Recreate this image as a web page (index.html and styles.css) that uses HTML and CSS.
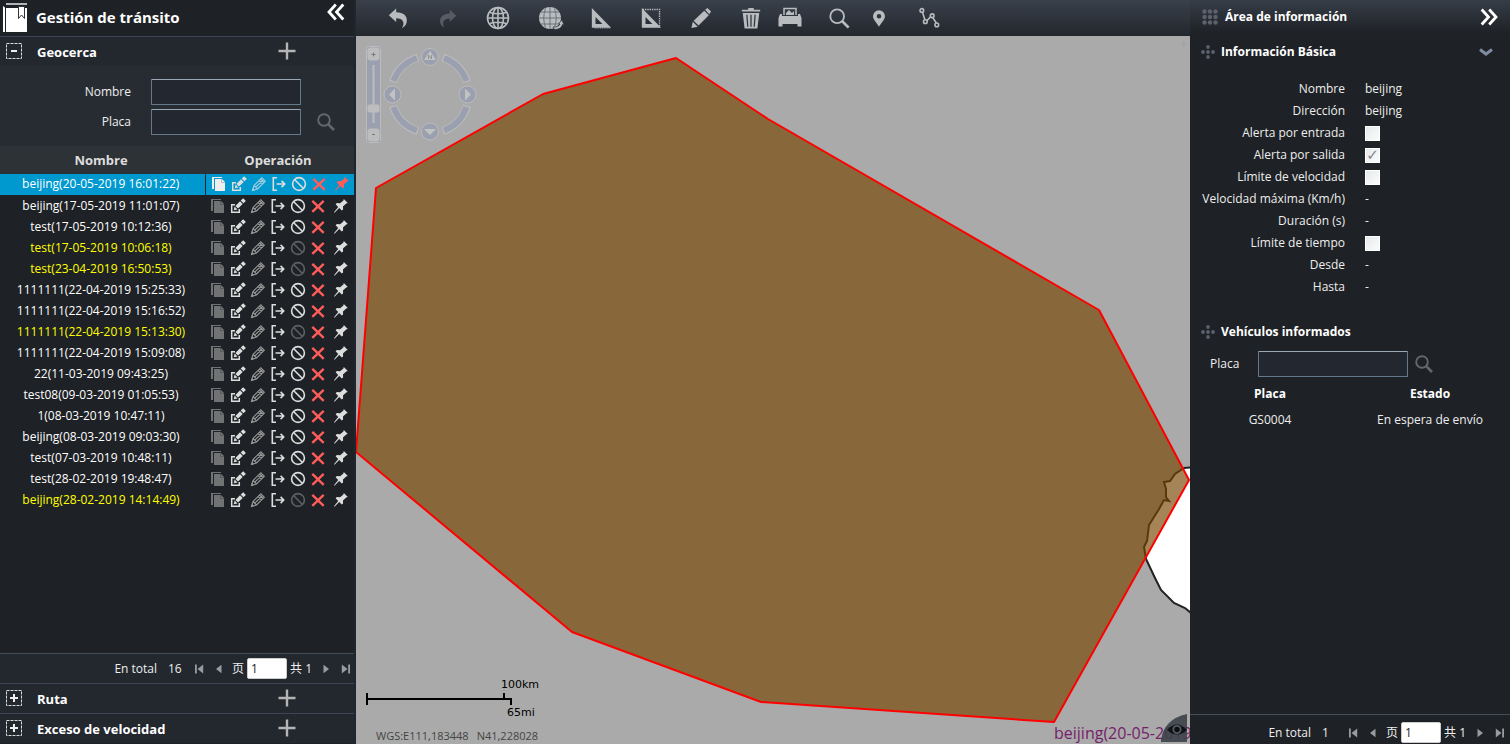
FILE: index.html
```html
<!DOCTYPE html>
<html lang="es">
<head>
<meta charset="utf-8">
<title>Gestión de tránsito</title>
<link rel="stylesheet" href="styles.css">
</head>
<body>
<svg class="sprite" aria-hidden="true">
  <symbol id="i-copy" viewBox="0 0 16 16"><path fill="currentColor" d="M1 1h10v1H3v11H1z"/><path fill="currentColor" d="M4 3h7l3 3v9H4z"/><path d="M10.500 3v3.500H14" fill="none" stroke="#0003"/></symbol>
  <symbol id="i-edit" viewBox="0 0 16 16"><path fill="none" stroke="currentColor" stroke-width="1.500" d="M5 6.700H1.700v7.600h7.600V11"/><path fill="currentColor" d="M3.800 12.200l.8-3.700 2.900 2.900zM5.400 7.900l4.600-4.600L12.700 6 8.100 10.600zM10.700 2.600L13.200.3l2.700 2.700-2.500 2.300z"/></symbol>
  <symbol id="i-pencil" viewBox="0 0 16 16"><path fill="none" stroke="currentColor" stroke-width="1.100" d="M1.500 14.500L3 9.500 10.800 1.700l3.500 3.500L6.500 13zM3 9.500L6.500 13M4.800 11.200l7.700-7.700M9.500 3l3.500 3.500M8 4.500L11.500 8"/><path fill="currentColor" d="M1 15l1-3 2 2z"/></symbol>
  <symbol id="i-export" viewBox="0 0 16 16"><path fill="none" stroke="currentColor" stroke-width="1.600" d="M6 1.800H2.300v12.400H6M5.500 8h8M10.600 4.900L13.700 8l-3.100 3.100"/></symbol>
  <symbol id="i-ban" viewBox="0 0 16 16"><g fill="none" stroke="currentColor" stroke-width="1.600"><circle cx="8" cy="8" r="6.400"/><path d="M3.500 3.500l9 9"/></g></symbol>
  <symbol id="i-x" viewBox="0 0 16 16"><path fill="none" stroke="currentColor" stroke-width="2.400" d="M2.300 2.800l11.400 11M13.700 2.800l-11.400 11"/></symbol>
  <symbol id="i-pin" viewBox="0 0 16 16"><path fill="currentColor" d="M10.800 1l4 4-1.600.4-3.200 3 .1 3-1.300 1.200-2.600-2.700L1.500 14.800 1 14.300l4.200-5.400L2.600 6.300l1.300-1.200 3.200.2 3.300-2.900z"/></symbol>
  <symbol id="i-search" viewBox="0 0 20 20"><g fill="none" stroke="currentColor"><circle cx="8" cy="8" r="5.800" stroke-width="1.900"/><path stroke-width="2.600" d="M12.400 12.400l5.600 5.600"/></g></symbol>
  <symbol id="i-plus" viewBox="0 0 18 18"><path fill="none" stroke="currentColor" stroke-width="2.400" d="M9 .5v17M.5 9h17"/></symbol>
  <symbol id="i-move" viewBox="0 0 14 14"><g fill="currentColor"><circle cx="7" cy="2" r="1.900"/><circle cx="2" cy="7" r="1.900"/><circle cx="7" cy="7" r="1.900"/><circle cx="12" cy="7" r="1.900"/><circle cx="7" cy="12" r="1.900"/></g></symbol>
  <symbol id="i-first" viewBox="0 0 10 10"><path fill="currentColor" d="M1 .5h1.800v9H1zM9.200.5v9L3.500 5z"/></symbol>
  <symbol id="i-prev" viewBox="0 0 10 10"><path fill="currentColor" d="M7.500.8v8.400L2 5z"/></symbol>
  <symbol id="i-next" viewBox="0 0 10 10"><path fill="currentColor" d="M2.500.8v8.400L8 5z"/></symbol>
  <symbol id="i-last" viewBox="0 0 10 10"><path fill="currentColor" d="M7.200.5H9v9H7.200zM.8.5v9L6.500 5z"/></symbol>
</svg>

<div class="app">
  <aside class="side">
    <header class="side-head">
      <svg class="book" viewBox="0 0 26 29"><path fill="#b5b5b5" d="M3 0h21v2H3z"/><path fill="#fff" d="M0 3l2 1.500V29H0z"/><path fill="#fff" d="M3 5h21v24H3z"/><path fill="#1e2125" d="M2 2h22v3H4z"/><path fill="#fff" stroke="#333" d="M15.500 3.500h6v12L18.500 12l-3 3.500z"/></svg>
      <h1>Gestión de tránsito</h1>
      <button class="collapse" aria-label="Contraer"><svg viewBox="0 0 18 18"><path fill="none" stroke="currentColor" stroke-width="2.800" d="M8.800 1.500L2 9l6.800 7.500M16.300 1.500L9.500 9l6.800 7.500"/></svg></button>
    </header>

    <section class="bar">
      <button class="toggle" aria-label="Contraer Geocerca"><svg viewBox="0 0 16 16"><rect x=".5" y=".5" width="15" height="15" fill="none" stroke="#ddd" stroke-dasharray="3 1"/><path stroke="#eee" stroke-width="2" d="M5 8h6"/></svg></button>
      <h2>Geocerca</h2>
      <button class="add" aria-label="Agregar geocerca"><svg><use href="#i-plus"/></svg></button>
    </section>

    <form class="filter">
      <label for="f-name">Nombre</label><input id="f-name" class="field" type="text">
      <label for="f-plate">Placa</label><input id="f-plate" class="field" type="text">
      <button class="find" type="button" aria-label="Buscar"><svg><use href="#i-search"/></svg></button>
    </form>

    <div class="list">
      <table class="fences">
        <thead><tr><th class="col-name">Nombre</th><th>Operación</th></tr></thead>
        <tbody id="fence-rows"></tbody>
      </table>
    </div>

    <nav class="pager" aria-label="Páginas de geocercas">
      <span>En total</span><span class="count">16</span>
      <button aria-label="Primera"><svg><use href="#i-first"/></svg></button>
      <button class="prev" aria-label="Anterior"><svg><use href="#i-prev"/></svg></button>
      <label for="p-left">页</label><input id="p-left" type="text" value="1"><span class="pages">共 1</span>
      <button aria-label="Siguiente"><svg><use href="#i-next"/></svg></button>
      <button aria-label="Última"><svg><use href="#i-last"/></svg></button>
    </nav>

    <section class="bar">
      <button class="toggle" aria-label="Expandir Ruta"><svg viewBox="0 0 16 16"><rect x=".5" y=".5" width="15" height="15" fill="none" stroke="#ddd" stroke-dasharray="3 1"/><path stroke="#eee" stroke-width="2" d="M4 8h8M8 4v8"/></svg></button>
      <h2>Ruta</h2>
      <button class="add" aria-label="Agregar ruta"><svg><use href="#i-plus"/></svg></button>
    </section>
    <section class="bar">
      <button class="toggle" aria-label="Expandir Exceso de velocidad"><svg viewBox="0 0 16 16"><rect x=".5" y=".5" width="15" height="15" fill="none" stroke="#ddd" stroke-dasharray="3 1"/><path stroke="#eee" stroke-width="2" d="M4 8h8M8 4v8"/></svg></button>
      <h2>Exceso de velocidad</h2>
      <button class="add" aria-label="Agregar exceso de velocidad"><svg><use href="#i-plus"/></svg></button>
    </section>
  </aside>

  <main class="center">
    <div class="toolbar">
      <div class="tools">
        <button aria-label="Deshacer"><svg viewBox="0 0 24 24"><path fill="currentColor" d="M2 9L10 1.500v4.300c8 0 12.500 4.200 11.500 10.200-.5 3.500-2.500 5.500-5.500 7.200 2-2.700 2.500-5.200 1.500-7.500-1-2.500-3.500-3.400-7.500-3.400v4z"/></svg></button>
        <button class="dim" aria-label="Rehacer"><svg viewBox="0 0 24 24"><path fill="currentColor" d="M21 9.500L14 3v4C7 7 2.500 11 3.500 16.500c.5 3 2.300 4.700 4.500 6-1.500-2.700-1.800-5-.8-7C8.300 13.500 10.500 12.600 14 12.600V16z"/></svg></button>
        <button aria-label="Mundo"><svg class="globe" viewBox="0 0 24 24"><g fill="none" stroke="currentColor" stroke-width="1.600"><circle cx="12" cy="12" r="10.500"/><ellipse cx="12" cy="12" rx="5.500" ry="10.500"/><path d="M12 2v20M2 12h20M4 6.500q8 2.500 16 0M4 17.500q8-2.500 16 0"/></g></svg></button>
      </div>
      <div class="tools">
        <button aria-label="Girar mundo"><svg viewBox="0 0 26 24" class="wide"><circle cx="12" cy="12" r="11" fill="currentColor"/><path fill="none" stroke="#5a616a" stroke-width=".8" d="M12 1v22M1 12h22M3 6h18M3 18h18M7.500 2.500Q4 12 7.500 21.500M16.500 2.500Q20 12 16.500 21.500"/><path fill="currentColor" stroke="#2d333c" stroke-width=".7" d="M15 21q6 0 7-3l-1.500-.5 3.500-3.500 2 5-1.500-.5q-1.500 5-8 5z"/></svg></button>
        <button aria-label="Medir"><svg viewBox="0 0 24 24"><path fill="currentColor" fill-rule="evenodd" d="M2 1l21 21.500H2zM6 11v7.500h7.500z"/><path stroke="currentColor" stroke-dasharray="1 1" d="M5 23h18"/></svg></button>
        <button aria-label="Medir área"><svg viewBox="0 0 24 24"><path fill="currentColor" fill-rule="evenodd" d="M2 1l21 21.500H2zM6 11v7.500h7.500z"/><path fill="none" stroke="currentColor" stroke-width="1.500" stroke-dasharray="1.500 1" d="M3 2.700h18.300V22"/></svg></button>
        <button aria-label="Dibujar"><svg viewBox="0 0 24 24"><path fill="currentColor" d="M1.500 22.800L3 16l5.500 5.500zM4 15L15.500 4l5 5L9.300 20.300zM16.500 3l2.500-2 4 4-2 3z"/></svg></button>
        <button aria-label="Eliminar"><svg viewBox="0 0 24 24"><path fill="currentColor" d="M2 3h7V1.200h6V3h7v2H2zM3 6.500h18l-2 17H5z"/><path stroke="#333943" stroke-width="1.400" d="M7.500 8.500l1 13M12 8.500v13M16.500 8.500l-1 13"/></svg></button>
        <button class="narrow" aria-label="Imprimir"><svg viewBox="0 0 24 24"><path fill="none" stroke="currentColor" stroke-width="1.500" d="M6 9V2.500h12V9"/><path fill="currentColor" d="M8 7l3-3 3 3 2-2v4H8zM2 8h2v2h16V8h2l1.500 4v8.500h-4V18h-15v2.500h-4V12z"/></svg></button>
      </div>
      <div class="tools">
        <button aria-label="Buscar en el mapa"><svg viewBox="0 0 24 24"><g fill="none" stroke="currentColor"><circle cx="10" cy="10" r="7.500" stroke-width="2"/><path stroke-width="3" d="M15 15l7.500 7.500"/></g></svg></button>
        <button class="pin" aria-label="Marcador"><svg viewBox="0 0 24 24"><path fill="currentColor" fill-rule="evenodd" d="M12 3.500a6.500 6.500 0 0 1 6.500 6.500c0 4-4 7-6.500 11.500C9.500 17 5.500 14 5.500 10A6.500 6.500 0 0 1 12 3.500zm0 4a2.500 2.500 0 1 0 0 5 2.500 2.500 0 0 0 0-5z"/></svg></button>
      </div>
      <div class="tools">
        <button aria-label="Ruta en el mapa"><svg viewBox="0 0 24 24"><g fill="none" stroke="currentColor" stroke-width="1.700"><path d="M5 6l2.500 8M9.500 15L14 10.500M16 11.500l4 6"/><circle cx="4.200" cy="3.800" r="2"/><circle cx="8" cy="16" r="2"/><circle cx="15.500" cy="9.500" r="2"/><circle cx="20.500" cy="19.500" r="2"/></g></svg></button>
      </div>
    </div>

    <div class="map">
      <svg class="map-art" viewBox="0 0 834 708" preserveAspectRatio="xMinYMin slice">
        <path fill="#fff" stroke="#222" stroke-width="2" d="M840 431L828 432 819 438 814 445 808 446 810 453 810 461 813 465 808 464 803 473 793 489 791 505 788 511 790 523 799 542 805 554 818 567 829 572 840 581z"/>
        <path fill="#764600" fill-opacity=".66" stroke="red" stroke-width="2" stroke-linejoin="round" d="M320 22L412 83 743 274 833 444 698 686 405 666 216 596 0 416 20 152 187 58z"/>
        <g fill="#9ba0b0" stroke="#bcbcbc">
          <rect x="10.500" y="10.500" width="14" height="96" rx="2"/>
          <path stroke-width="2" d="M17.500 29v58"/>
          <g fill="#bdbdbd"><rect x="12" y="12" width="11" height="12" rx="2"/><rect x="12" y="93" width="11" height="12" rx="2"/><rect x="12" y="69" width="11" height="7" rx="1"/></g>
          <path stroke="#777" d="M15.500 18.500h4M17.500 16.500v4M16 98.500h3"/>
          <g fill="none"><path stroke-width="8" d="M62 21.500A38 38 0 0 0 37 46M87 21.500A38 38 0 0 1 111 46M62 95A38 38 0 0 1 37 70M87 95A38 38 0 0 0 111 70"/><path stroke="#9ba0b0" stroke-width="6" d="M61 22A38 38 0 0 0 37.500 45M88 22A38 38 0 0 1 110.500 45M61 94.500A38 38 0 0 1 37.500 71M88 94.500A38 38 0 0 0 110.500 71"/></g>
          <circle cx="74" cy="21" r="8.500"/><circle cx="36.500" cy="58.500" r="8.500"/><circle cx="111.500" cy="58.500" r="8.500"/><circle cx="74" cy="95.500" r="8.500"/>
          <path fill="#c2c2c2" stroke="none" d="M74 15l6 9H68zM33 58.500l6-6v12zM115 58.500l-6-6v12zM74 99l-6-6h12z"/>
          <path fill="none" stroke="#888" stroke-width=".8" d="M72.500 23v-4l3 4v-4"/>
          <ellipse cx="828" cy="8" rx="1.500" ry="3" stroke="none" opacity=".6"/>
        </g>
      </svg>
      <div class="scale">
        <span class="km">100km</span>
        <svg viewBox="0 0 146 12"><path fill="none" stroke="#000" stroke-width="2" d="M1 0v12M1 6h144v6M138 6V0"/></svg>
        <span class="mi">65mi</span>
      </div>
      <div class="coords"><span>WGS:E111,183448</span><span>N41,228028</span></div>
      <div class="fence-label">beijing(20-05-2019 16:01:22)</div>
      <button class="eye" aria-label="Mostrar capas"><svg viewBox="0 0 26 28"><path fill="#3c4048" fill-opacity=".9" d="M26 0v28H0v-2Q3 5 26 0z"/><path fill="#111417" d="M6 16Q16 5 26 16 16 25 6 16z"/><circle cx="16" cy="15.500" r="4.500" fill="#555a61"/><circle cx="16" cy="15.500" r="2.700" fill="#0c0e10"/></svg></button>
    </div>
  </main>

  <aside class="info">
    <header class="info-head">
      <svg class="dots" viewBox="0 0 16 16"><g fill="#5b616d"><circle cx="2.500" cy="2.500" r="2.200"/><circle cx="8" cy="2.500" r="2.200"/><circle cx="13.500" cy="2.500" r="2.200"/><circle cx="2.500" cy="8" r="2.200"/><circle cx="8" cy="8" r="2.200"/><circle cx="13.500" cy="8" r="2.200"/><circle cx="2.500" cy="13.500" r="2.200"/><circle cx="8" cy="13.500" r="2.200"/><circle cx="13.500" cy="13.500" r="2.200"/></g></svg>
      <h2>Área de información</h2>
      <button class="collapse" aria-label="Ocultar"><svg viewBox="0 0 18 18"><path fill="none" stroke="currentColor" stroke-width="2.800" d="M1.700 1.500L8.500 9l-6.800 7.500M9.200 1.500L16 9l-6.800 7.500"/></svg></button>
    </header>
    <div class="info-sec">
      <svg><use href="#i-move"/></svg><h3>Información Básica</h3>
      <button class="chevron" aria-label="Contraer sección"><svg viewBox="0 0 14 8"><path fill="none" stroke="currentColor" stroke-width="3" d="M1 1.500l6 4.500 6-4.500"/></svg></button>
    </div>
    <div class="props">
      <span class="key">Nombre</span><span>beijing</span>
      <span class="key">Dirección</span><span>beijing</span>
      <label class="key" for="c-in">Alerta por entrada</label><input id="c-in" type="checkbox">
      <label class="key" for="c-out">Alerta por salida</label><input id="c-out" type="checkbox" checked>
      <label class="key" for="c-speed">Límite de velocidad</label><input id="c-speed" type="checkbox">
      <span class="key">Velocidad máxima (Km/h)</span><span>-</span>
      <span class="key">Duración (s)</span><span>-</span>
      <label class="key" for="c-time">Límite de tiempo</label><input id="c-time" type="checkbox">
      <span class="key">Desde</span><span>-</span>
      <span class="key">Hasta</span><span>-</span>
    </div>
    <div class="info-sec"><svg><use href="#i-move"/></svg><h3>Vehículos informados</h3></div>
    <form class="plate">
      <label for="v-plate">Placa</label><input id="v-plate" class="field" type="text">
      <button class="find" type="button" aria-label="Buscar vehículo"><svg><use href="#i-search"/></svg></button>
    </form>
    <table class="vehicles">
      <thead><tr><th>Placa</th><th>Estado</th></tr></thead>
      <tbody><tr><td>GS0004</td><td>En espera de envío</td></tr></tbody>
    </table>
    <nav class="pager pager-info" aria-label="Páginas de vehículos">
      <span>En total</span><span class="count">1</span>
      <button aria-label="Primera"><svg><use href="#i-first"/></svg></button>
      <button class="prev" aria-label="Anterior"><svg><use href="#i-prev"/></svg></button>
      <label for="p-right">页</label><input id="p-right" type="text" value="1"><span class="pages">共 1</span>
      <button aria-label="Siguiente"><svg><use href="#i-next"/></svg></button>
      <button aria-label="Última"><svg><use href="#i-last"/></svg></button>
    </nav>
  </aside>
</div>
<script src="app.js"></script>
</body>
</html>
```
FILE: styles.css
```css
* { box-sizing: border-box; }
body {
  margin: 0;
  background: #1e2125;
  color: #eee;
  font: 12px/20px "Open Sans", "Noto Sans", "Noto Sans CJK SC", sans-serif;
}
h1, h2, h3 { margin: 0; font-size: 13px; color: #fff; white-space: nowrap; }
button { display: flex; align-items: center; justify-content: center; padding: 0; border: 0; background: none; color: inherit; cursor: pointer; }
input { font: inherit; margin: 0; }
svg { display: block; flex: none; }
.sprite { position: absolute; width: 0; height: 0; }

.app { display: grid; grid-template-columns: 356px minmax(0, 1fr) 320px; height: 100vh; }

.side { display: flex; flex-direction: column; min-height: 0; padding-bottom: 1px; border-right: 2px solid #1f2630; background: #1e2125; }
.side-head { display: flex; align-items: center; height: 36px; padding: 0 9px 4px 3px; gap: 7px; }
.side-head h1 { flex: 1; font-size: 15px; padding-top: 2px; }
.book { width: 26px; height: 29px; margin-top: 2px; }
.collapse { color: #fff; }
.collapse svg { width: 18px; height: 18px; }
.side-head .collapse svg { margin-bottom: 8px; }

.bar { display: flex; align-items: center; height: 30px; padding: 0 58px 2px 6px; border-top: 1px solid #3f4454; background: #23272e; }
.bar h2 { flex: 1; padding: 2px 0 0 15px; }
.toggle svg { width: 16px; height: 16px; }
.add { color: #b4b4b4; }
.add svg { width: 18px; height: 18px; }

.filter { display: grid; grid-template-columns: 131px 150px 20px; gap: 4px 20px; align-items: center; align-content: start; height: 80px; padding-top: 13px; background: #272c33; }
.filter label { grid-column: 1; text-align: right; }
.filter .find { grid-column: 3; margin-left: -10px; }
.field { width: 150px; height: 26px; padding: 0 6px; border: 1px solid #66798a; border-top-color: #9aa7b4; border-radius: 1px; background: #23272f; color: #fff; }
.find { color: #65686b; }
.find svg { width: 20px; height: 20px; }

.list { flex: 1; min-height: 0; overflow: hidden; }
.fences { width: 100%; border-collapse: collapse; table-layout: fixed; text-align: center; }
.fences th { height: 28px; padding: 0 3px 0 0; font-size: 13px; background: #2d3236; color: #ddd; }
.fences .col-name { width: 205px; }
.fences td { height: 21px; padding: 0; line-height: 20px; border-bottom: 1px solid #1e2125; color: #fff; }
.fences td:first-child { padding-right: 3px; }
.fences .off td:first-child { color: #ff0; }
.fences .sel td { background: #0099cf; }
.fences .sel td + td { border-left: 1px solid #1e2125; }
.ops { display: flex; gap: 4px; padding-left: 5px; }
.ops button { width: 16px; height: 20px; color: #ddd; }
.ops svg { width: 16px; height: 16px; }
.ops .i-copy { color: #707273; }
.ops .i-pencil { color: #999; }
.ops .i-x { color: #ff5c5c; }
.ops .i-pin { margin-left: 3px; }
.off .ops .i-ban { color: #5e6062; }
.sel .ops .i-copy { color: #eee; }
.sel .ops .i-pencil { color: #a5cfe0; }
.sel .ops .i-pin { color: #ff5c5c; }

.pager { display: flex; align-items: center; justify-content: flex-end; height: 30px; padding-right: 3px; border-top: 1px solid #454d55; background: #23272e; }
.pager .count { width: 14px; margin: 0 12px 0 11px; }
.pager button { width: 10px; margin-right: 10px; color: #999c9e; }
.pager .prev { margin-right: 8px; }
.pager button:last-child { margin-right: 0; }
.pager svg { width: 10px; height: 10px; }
.pager input { width: 40px; height: 21px; margin: 0 3px; padding: 0 3px; border: 1px solid #ccc; border-radius: 2px; background: #fff; color: #222; }
.pager .pages { margin-right: 9px; }

.center { display: flex; flex-direction: column; min-width: 0; }
.toolbar { display: flex; height: 36px; padding-left: 17px; background: linear-gradient(#39404a, #23272e); color: #b9bcbf; }
.tools { display: flex; margin-right: 10px; }
.tools:first-child { margin-right: 3px; }
.tools button { width: 50px; }
.tools .narrow { width: 28px; }
.tools .pin { width: 30px; }
.tools .dim { color: #565d64; }
.tools svg { width: 22px; height: 22px; }
.tools .globe { width: 24px; height: 24px; }
.tools .wide { width: 26px; height: 24px; }
.tools .narrow svg { width: 24px; height: 24px; }

.map { position: relative; flex: 1; overflow: hidden; background: #aaa; color: #000; }
.map-art { position: absolute; inset: 0; width: 100%; height: 100%; }
.scale { position: absolute; left: 10px; bottom: 23px; width: 180px; display: grid; font: 11px/16px "DejaVu Sans", sans-serif; }
.scale svg { width: 146px; height: 12px; }
.km { padding-left: 135px; }
.mi { padding-left: 141px; }
.coords { position: absolute; left: 20px; bottom: -2px; display: flex; gap: 8px; font-size: 11px; color: #444; }
.fence-label { position: absolute; left: 698px; bottom: 0; font-size: 16px; line-height: 22px; color: #751e6b; white-space: nowrap; }
.eye { position: absolute; right: 3px; bottom: 2px; }
.eye svg { width: 26px; height: 28px; }

.info { display: flex; flex-direction: column; min-height: 0; background: #1e2125; }
.info h2, .info h3 { font-size: 12px; }
.info-head { display: flex; align-items: center; height: 34px; padding: 0 12px; gap: 7px; background: linear-gradient(#363d47, #1e2125); }
.info-head h2 { flex: 1; }
.dots { width: 16px; height: 16px; }
.info-sec { display: flex; align-items: center; height: 36px; padding: 0 17px 0 11px; gap: 6px; color: #5b616d; }
.info-sec h3 { flex: 1; }
.info-sec svg { width: 14px; height: 14px; }
.info-sec .chevron svg { width: 14px; height: 8px; }
.chevron { color: #7f8ba0; }
.props { display: grid; grid-template-columns: 155px 1fr; column-gap: 20px; grid-auto-rows: 22px; align-items: center; padding: 8px 0 16px; }
.key { text-align: right; white-space: nowrap; }
input[type="checkbox"] { appearance: none; width: 15px; height: 15px; border: 1px solid #fff; background: linear-gradient(135deg, #e6e9ec, #fbfbfb); }
input[type="checkbox"]:checked { display: grid; place-items: center; }
input[type="checkbox"]:checked::before { content: "✓"; color: #888; font: bold 15px/13px "DejaVu Sans", sans-serif; }
.plate { display: flex; align-items: center; height: 28px; padding-left: 20px; }
.plate label { width: 48px; }
.plate .find { margin-left: 6px; }
.vehicles { width: 100%; border-collapse: collapse; table-layout: fixed; text-align: center; margin-top: 3px; }
.vehicles th, .vehicles td { height: 26px; padding: 0; }
.vehicles th { color: #fff; }
.pager-info { margin-top: auto; padding: 6px 5px 0 0; background: #1e2125; }
```
FILE: app.js
```js
const fences = [
  ["beijing(20-05-2019 16:01:22)", "sel"],
  ["beijing(17-05-2019 11:01:07)", ""],
  ["test(17-05-2019 10:12:36)", ""],
  ["test(17-05-2019 10:06:18)", "off"],
  ["test(23-04-2019 16:50:53)", "off"],
  ["1111111(22-04-2019 15:25:33)", ""],
  ["1111111(22-04-2019 15:16:52)", ""],
  ["1111111(22-04-2019 15:13:30)", "off"],
  ["1111111(22-04-2019 15:09:08)", ""],
  ["22(11-03-2019 09:43:25)", ""],
  ["test08(09-03-2019 01:05:53)", ""],
  ["1(08-03-2019 10:47:11)", ""],
  ["beijing(08-03-2019 09:03:30)", ""],
  ["test(07-03-2019 10:48:11)", ""],
  ["test(28-02-2019 19:48:47)", ""],
  ["beijing(28-02-2019 14:14:49)", "off"]
];
const ops = [
  ["copy", "Copiar"], ["edit", "Editar"], ["pencil", "Dibujar"], ["export", "Exportar"],
  ["ban", "Desactivar"], ["x", "Eliminar"], ["pin", "Fijar"]
];
const buttons = ops.map(([icon, label]) =>
  `<button class="i-${icon}" aria-label="${label}"><svg><use href="#i-${icon}"/></svg></button>`).join("");

document.getElementById("fence-rows").innerHTML = fences.map(([name, state]) =>
  `<tr class="${state}"><td>${name}</td><td><div class="ops">${buttons}</div></td></tr>`).join("");
```
